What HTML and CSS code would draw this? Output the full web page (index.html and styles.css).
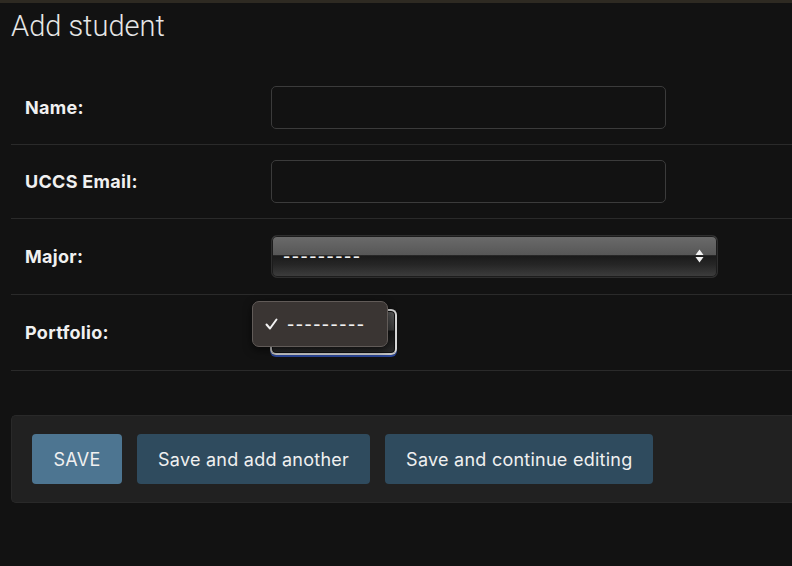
FILE: index.html
```html
<!DOCTYPE html>
<html>
<head>
<meta charset="utf-8">
<link rel="stylesheet" href="styles.css">
</head>
<body>
<div class="topline"></div>
<main class="content">
  <h1 class="title">Add student</h1>
  <form class="form">
    <div class="row">
      <label class="label">Name:</label>
      <div class="field"><div class="input"></div></div>
    </div>
    <div class="row">
      <label class="label">UCCS Email:</label>
      <div class="field"><div class="input"></div></div>
    </div>
    <div class="row row-tall">
      <label class="label">Major:</label>
      <div class="field">
        <div class="select">
          <span class="dashes">---------</span>
          <svg class="arrows" width="9" height="14" viewBox="0 0 9 14"><path d="M4.5 0.5 L8.5 6 L0.5 6 Z M0.5 8 L8.5 8 L4.5 13.5 Z" fill="#f0f0f0"/></svg>
        </div>
      </div>
    </div>
    <div class="row row-tall">
      <label class="label">Portfolio:</label>
      <div class="field field-pop">
        <div class="select-small"></div>
        <div class="popup">
          <svg class="check" width="13" height="12" viewBox="0 0 13 12"><path d="M1.5 6.5 L5 10.5 L11.5 1.5" fill="none" stroke="#f2f2f2" stroke-width="2" stroke-linecap="round" stroke-linejoin="round"/></svg>
          <span class="dashes">---------</span>
        </div>
      </div>
    </div>
  </form>
  <div class="submit-row">
    <button class="btn btn-primary" type="button">SAVE</button>
    <button class="btn" type="button">Save and add another</button>
    <button class="btn" type="button">Save and continue editing</button>
  </div>
</main>
</body>
</html>
```
FILE: styles.css
```css
* { box-sizing: border-box; }
html, body { margin: 0; padding: 0; }
body {
  background: #121212;
  font-family: Inter, Roboto, "Liberation Sans", sans-serif;
  color: #eeeeee;
  height: 566px;
  overflow: hidden;
}
.topline {
  height: 3px;
  background: #2e2a22;
}
.content {
  padding-left: 11px;
}
.title {
  margin: 0;
  padding: 6px 0 0 0;
  height: 68px;
  font-family: Roboto, "Liberation Sans", sans-serif;
  font-size: 29px;
  font-weight: 300;
  color: #e6e6e6;
}
.form {
  margin: 0;
}
.row {
  display: flex;
  align-items: center;
  height: 74px;
  padding: 15px 0 16px 0;
  border-bottom: 1px solid #2a2a2a;
}
.row-tall {
  height: 76px;
}
.label {
  width: 260px;
  padding-left: 14px;
  font-size: 18px;
  letter-spacing: 0.3px;
  font-weight: 700;
  color: #f0f0f0;
}
.field {
  display: flex;
  align-items: center;
}
.input {
  width: 395px;
  height: 43px;
  border: 1px solid #3b3b3b;
  border-radius: 5px;
  background: #121212;
}
.select {
  width: 447px;
  height: 43px;
  border: 1px solid #2e2e2e;
  border-radius: 6px;
  background: linear-gradient(#6b6b6b 0%, #575757 46%, #1a1a1a 48%, #262626 70%, #3e3e3e 100%);
  box-shadow: inset 0 0 0 1px #1c1c1c;
  display: flex;
  align-items: center;
  justify-content: space-between;
  padding: 0 13px 0 11px;
}
.dashes {
  font-family: "DejaVu Sans", sans-serif;
  font-size: 20px;
  letter-spacing: 1.5px;
  color: #f2f2f2;
  line-height: 1;
}
.arrows { display: block; }
.field-pop {
  position: relative;
  margin-left: -1px;
}
.select-small {
  width: 127px;
  height: 46px;
  border-radius: 6px;
  border: 2px solid #d8d8d8;
  border-bottom-color: #c8c8c8;
  box-shadow: 0 2px 0 0 #2a4596, inset 0 0 0 1px #111;
  background: linear-gradient(#5a5a5a 0%, #3a3a3a 45%, #151515 48%, #2a2a2a 100%);
}
.popup {
  position: absolute;
  left: -18px;
  top: -8px;
  width: 136px;
  height: 46px;
  border-radius: 7px;
  background: #3a3533;
  border: 1px solid #615b58;
  box-shadow: 0 3px 8px rgba(0,0,0,0.6);
  display: flex;
  align-items: center;
  padding-left: 12px;
}
.check { display: block; margin-right: 9px; margin-top: -1px; }
.submit-row {
  margin-top: 44px;
  height: 88px;
  background: #212121;
  border: 1px solid #292929;
  border-right: none;
  border-radius: 5px 0 0 5px;
  display: flex;
  align-items: center;
  gap: 15px;
  padding: 0 0 0 20px;
}
.btn {
  height: 50px;
  border: none;
  border-radius: 4px;
  background: #2f4b5e;
  color: #f0f0f0;
  font-family: Inter, Roboto, "Liberation Sans", sans-serif;
  font-size: 18px;
  letter-spacing: 0.25px;
  font-weight: 400;
  padding: 0 21px;
  margin: 0;
}
.btn-primary {
  background: #4d7591;
  width: 90px;
  padding: 0;
}
```
